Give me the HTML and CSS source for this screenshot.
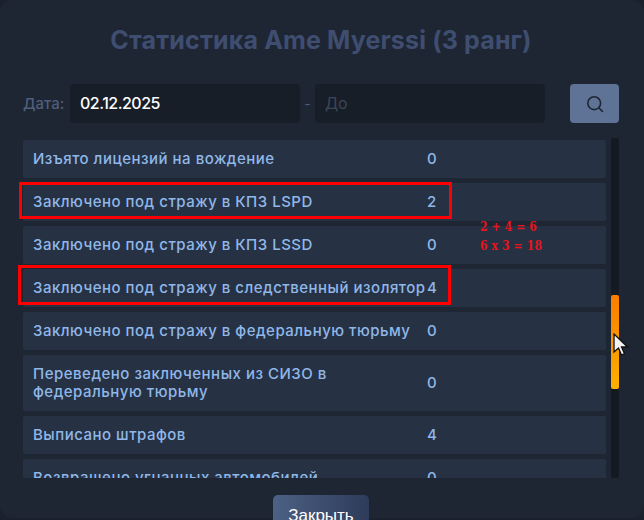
FILE: index.html
```html
<!DOCTYPE html>
<html lang="ru">
<head>
<meta charset="utf-8">
<title>Статистика</title>
<link rel="stylesheet" href="styles.css">
</head>
<body>
<div class="modal">
  <h1 class="title">Статистика Ame Myerssi (3 ранг)</h1>
  <div class="filters">
    <label class="label">Дата:</label>
    <div class="input value">02.12.2025</div>
    <span class="dash">-</span>
    <div class="input placeholder">До</div>
    <button class="search" aria-label="Поиск">
      <svg width="18" height="18" viewBox="0 0 18 18" fill="none" stroke="#1e2633" stroke-width="1.6" stroke-linecap="round"><circle cx="8.2" cy="8.2" r="6.4"/><path d="M13 13l3.4 3.4"/></svg>
    </button>
  </div>
  <div class="list-wrap">
    <div class="list">
      <div class="row"><span class="name">Изъято лицензий на вождение</span><span class="num">0</span></div>
      <div class="row"><span class="name">Заключено под стражу в КПЗ LSPD</span><span class="num">2</span></div>
      <div class="row"><span class="name">Заключено под стражу в КПЗ LSSD</span><span class="num">0</span></div>
      <div class="row"><span class="name">Заключено под стражу в следственный изолятор</span><span class="num">4</span></div>
      <div class="row"><span class="name">Заключено под стражу в федеральную тюрьму</span><span class="num">0</span></div>
      <div class="row tall"><span class="name">Переведено заключенных из СИЗО в федеральную тюрьму</span><span class="num">0</span></div>
      <div class="row"><span class="name">Выписано штрафов</span><span class="num">4</span></div>
      <div class="row"><span class="name">Возвращено угнанных автомобилей</span><span class="num">0</span></div>
    </div>
    <div class="track"><div class="thumb"></div></div>
  </div>
  <div class="footer"><button class="close">Закрыть</button></div>
</div>
<div class="mark mark-one"></div>
<div class="mark mark-two"></div>
<div class="note">2 + 4 = 6<br>6 x 3 = 18</div>
<svg class="cursor" width="16" height="24" viewBox="0 0 16 24"><path d="M1 1v18l4.5-4 3 7 3-1.300-3-6.700h6z" fill="#f2f2f2" stroke="#111" stroke-width="1.300"/></svg>
</body>
</html>
```
FILE: styles.css
```css
* { box-sizing: border-box; }
html, body { margin: 0; height: 520px; overflow: hidden; background: #1a212c; }
body { position: relative; font-family: "Inter", "Noto Sans", sans-serif; }
.modal { height: 518px; background: #1e2633; border-radius: 12px; padding: 25px 25px 0 23px; }
.title { margin: 0; height: 30px; line-height: 30px; text-align: center; font-size: 25px; font-weight: 700; letter-spacing: 0.15px; color: #3f4e70; white-space: nowrap; }
.filters { display: flex; align-items: center; margin-top: 29px; height: 39px; }
.label { width: 47px; font-size: 15px; font-weight: 500; color: #4e5e7c; }
.input { width: 230px; height: 39px; line-height: 39px; background: #181e28; border-radius: 4px; padding-left: 10px; font-size: 16px; font-weight: 500; letter-spacing: -0.5px; }
.value { color: #fff; }
.placeholder { color: #3c4658; font-weight: 400; letter-spacing: 0; }
.dash { width: 15px; text-align: center; color: #4b5b78; font-size: 14px; }
.search { width: 49px; height: 39px; margin-left: 25px; border: 0; border-radius: 4px; background: #5e7396; display: flex; align-items: center; justify-content: center; padding: 0; }
.list-wrap { display: flex; gap: 5px; height: 340px; margin-top: 15px; }
.list { width: 583px; height: 340px; overflow: hidden; padding-top: 2px; display: flex; flex-direction: column; gap: 5px; }
.row { flex: none; display: flex; align-items: center; min-height: 38px; padding-left: 10px; background: #273144; border-radius: 2px; font-size: 15px; font-weight: 450; letter-spacing: 0.5px; line-height: 18px; color: #8fb8e8; }
.tall { height: 56px; }
.name { width: 394px; flex: none; }
.track { width: 8px; height: 340px; background: #141a24; border-radius: 2px; padding-top: 157px; }
.thumb { height: 94px; border-radius: 2px; background: linear-gradient(180deg, #f97d00, #fdb000); }
.footer { display: flex; justify-content: center; margin-top: 17px; height: 25px; }
.close { width: 96px; height: 41px; flex: none; border: 0; border-radius: 5px; background: linear-gradient(90deg, #4c6184, #2e3b5a); color: #fff; font-size: 17px; font-weight: 500; padding: 0; }
.mark { position: absolute; border: 3px solid #ff0000; }
.mark-one { left: 19px; top: 182px; width: 433px; height: 37px; }
.mark-two { left: 18px; top: 265px; width: 433px; height: 40px; }
.note { position: absolute; left: 480px; top: 218px; color: #e8141c; font-family: "DejaVu Serif Condensed", "DejaVu Serif", serif; font-weight: 700; font-size: 12px; line-height: 19px; letter-spacing: 0.15px; }
.cursor { position: absolute; left: 613px; top: 333px; }
```
